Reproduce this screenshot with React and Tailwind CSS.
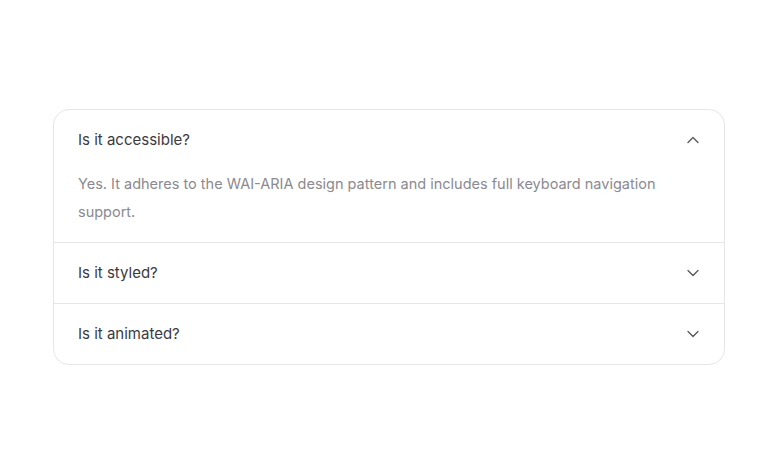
import { useState } from "react";
import { ChevronDown } from "lucide-react";

const items = [
  {
    q: "Is it accessible?",
    a: "Yes. It adheres to the WAI-ARIA design pattern and includes full keyboard navigation support.",
  },
  { q: "Is it styled?", a: "Yes. It comes with default styles that match the other components." },
  { q: "Is it animated?", a: "Yes. It's animated by default, but you can disable it if you prefer." },
];

export default function App() {
  const [open, setOpen] = useState(0);

  return (
    <div className="min-h-screen flex items-center justify-center bg-white pl-[2px] pt-[2px] font-['Inter',sans-serif]">
      <div className="w-[672px] rounded-2xl border border-[#e6e6e6] bg-white">
        {items.map((item, i) => (
          <div key={item.q} className={i > 0 ? "border-t border-[#e6e6e6]" : ""}>
            <button
              onClick={() => setOpen(open === i ? -1 : i)}
              className="flex h-[60px] w-full items-center justify-between pl-6 pr-[21px] text-left text-[15px] text-[#3a3a40]"
            >
              {item.q}
              <ChevronDown
                size={20}
                strokeWidth={1.5}
                className={"text-[#55555c] " + (open === i ? "rotate-180" : "")}
              />
            </button>
            {open === i && (
              <p className="px-6 pb-4 text-[14.5px] leading-7 text-[#8a8a8f]">{item.a}</p>
            )}
          </div>
        ))}
      </div>
    </div>
  );
}
